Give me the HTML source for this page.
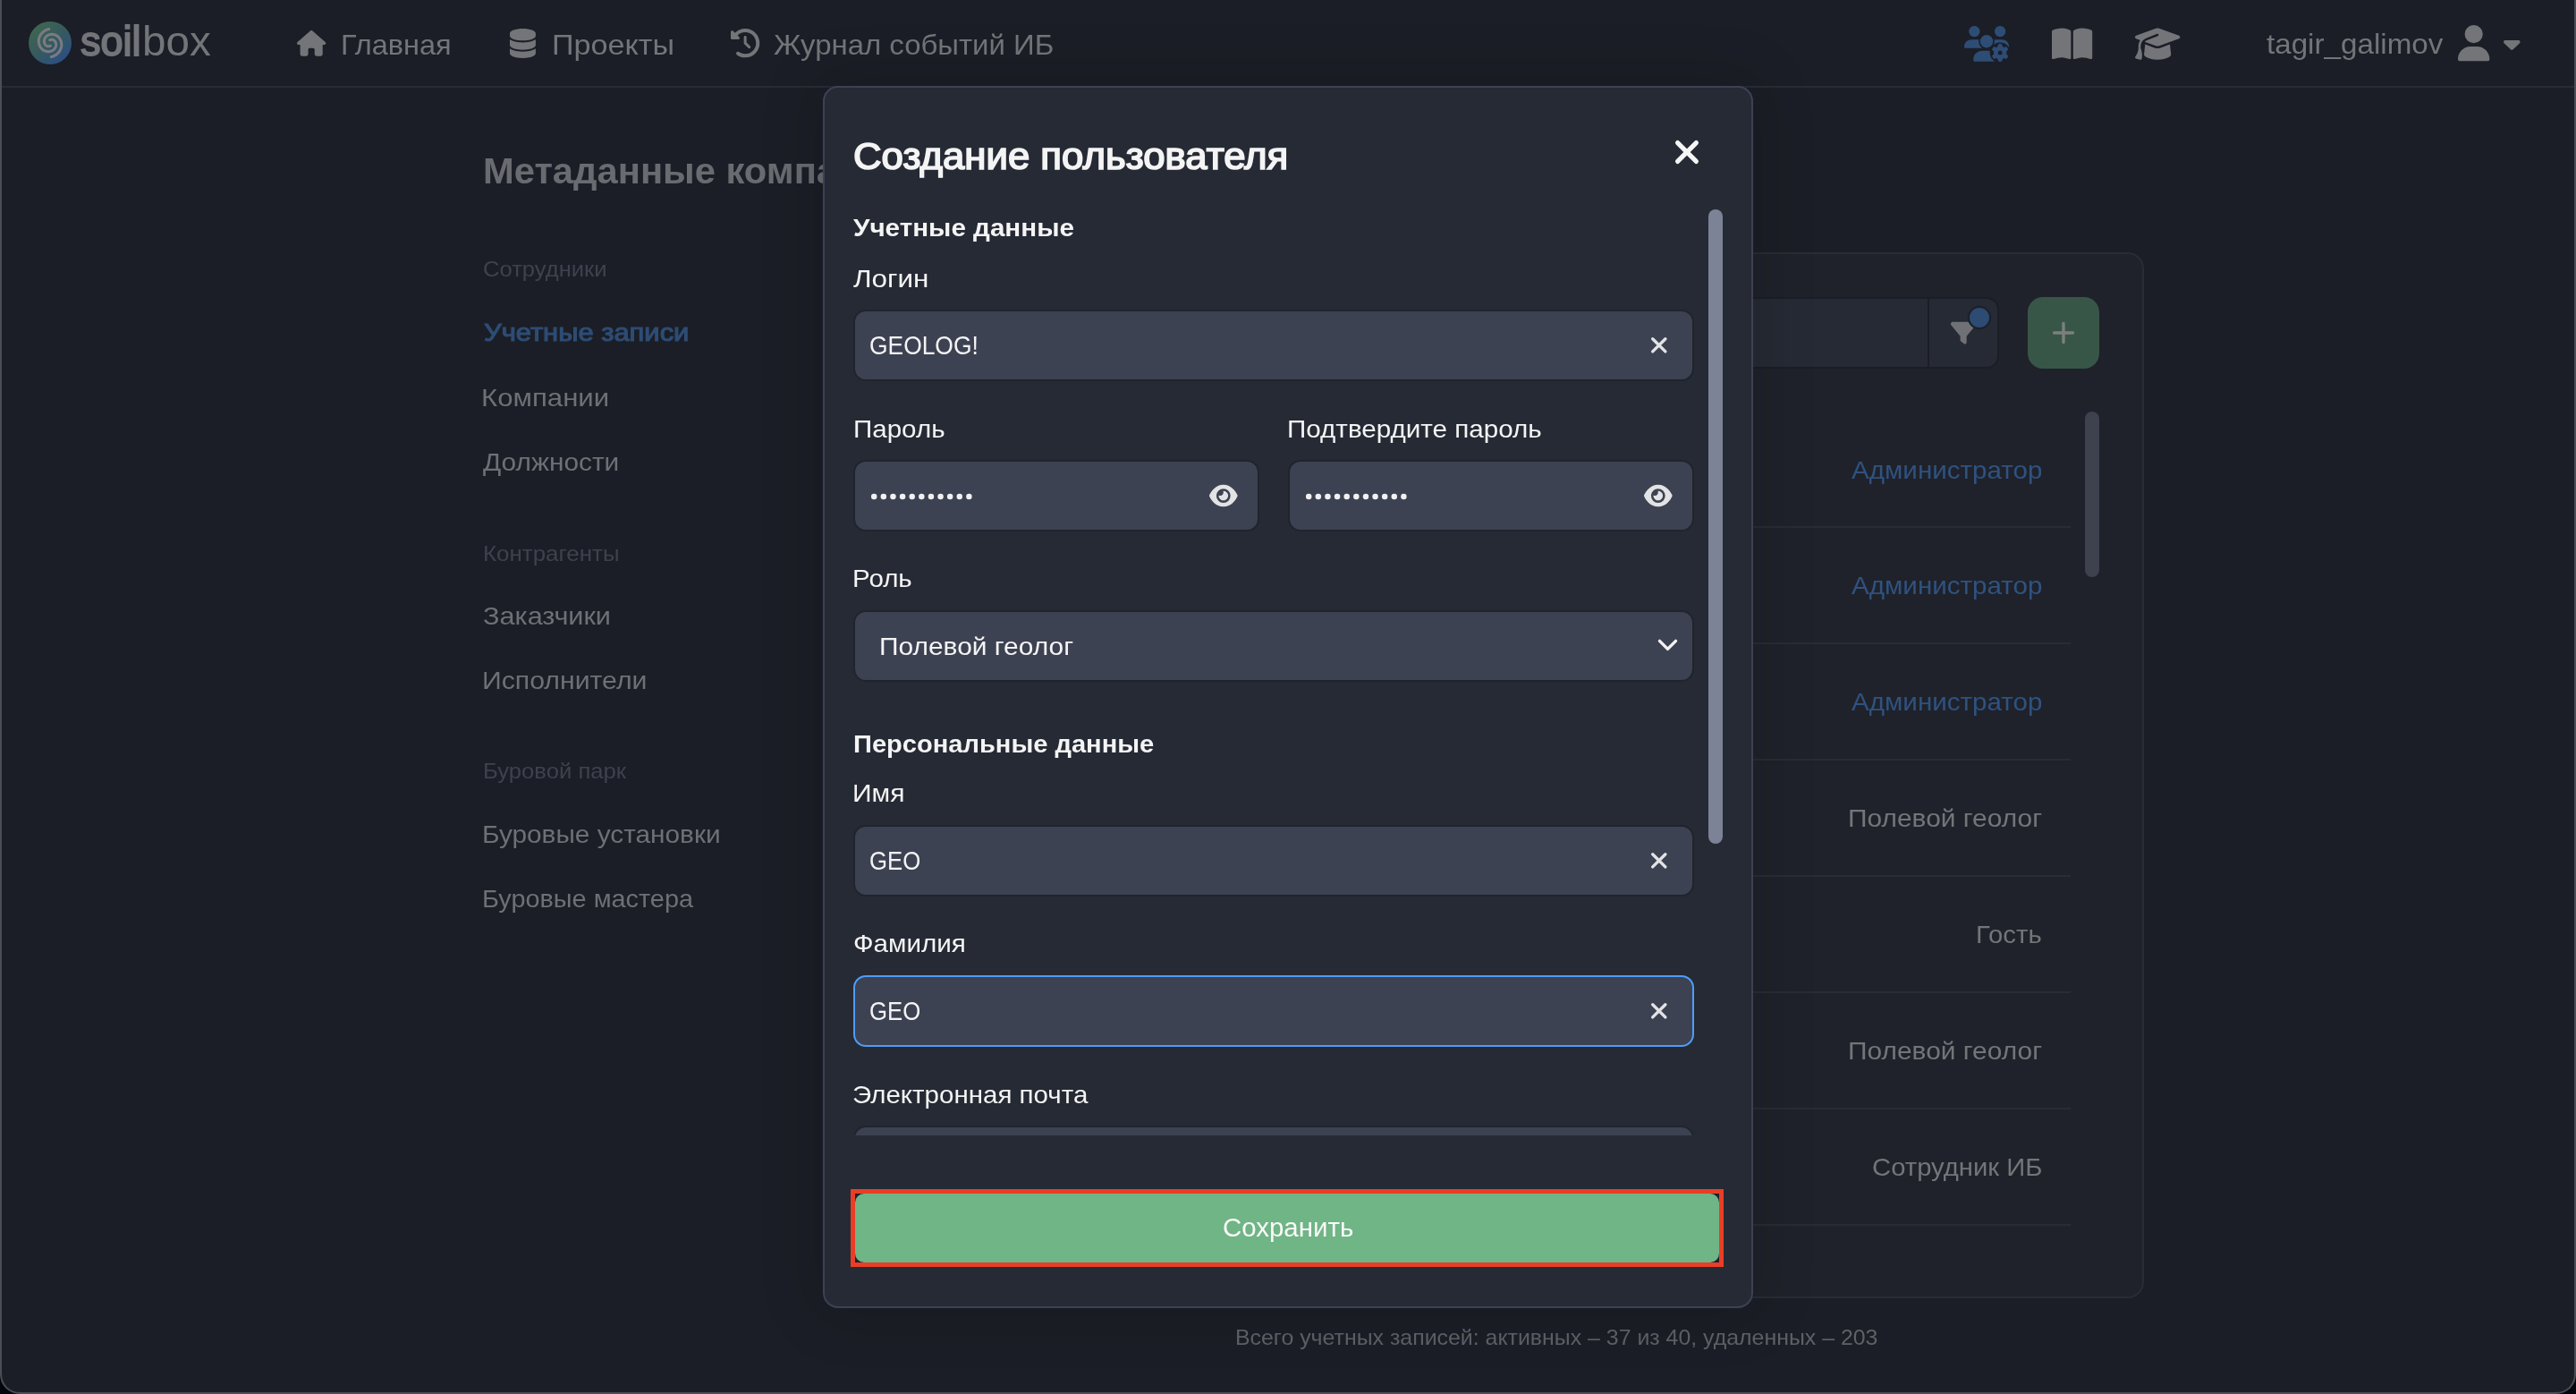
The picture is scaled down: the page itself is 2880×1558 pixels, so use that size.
<!DOCTYPE html>
<html lang="ru"><head><meta charset="utf-8"><title>soilbox</title>
<style>
html,body{margin:0;padding:0;background:#04050d}
body{width:2880px;height:1558px;font-family:"Liberation Sans", sans-serif;position:relative}
#win{position:absolute;left:0;top:0;width:2880px;height:1558px;box-sizing:border-box;background:#1b1e26;
 border-left:2px solid #4b4e54;border-right:2px solid #4b4e54;border-bottom:2px solid #4b4e54;border-radius:0 0 22px 22px;overflow:hidden}
#page{position:absolute;left:-2px;top:0;width:2880px;height:1558px;will-change:transform}
.t{position:absolute;white-space:nowrap;line-height:1;transform-origin:0 0;display:block}
.i{position:absolute;display:block;overflow:visible}
#nav{position:absolute;left:0;top:0;width:2880px;height:96px;border-bottom:2px solid #282c37;box-sizing:content-box}
#panel{position:absolute;left:1000px;top:282px;width:1397px;height:1169px;box-sizing:border-box;background:#1f222a;border:2px solid #282c36;border-radius:18px}
#search{position:absolute;left:1100px;top:332px;width:1135px;height:80px;box-sizing:border-box;background:#262a34;border:2px solid #1b1e26;border-radius:14px}
#search i{position:absolute;left:1053px;top:0;width:2px;height:76px;background:#1b1e26}
#add{position:absolute;left:2267px;top:332px;width:80px;height:80px;border-radius:17px;background:#385648}
.sep{position:absolute;left:1000px;width:1315px;height:2px;background:#282c36}
#lsb{position:absolute;left:2331px;top:460px;width:16px;height:185px;border-radius:8px;background:#3e414e}
#modal{position:absolute;left:920px;top:96px;width:1040px;height:1366px;box-sizing:border-box;background:#262a34;border:2px solid #3c4254;border-radius:17px;
 box-shadow:0 0 64px 8px rgba(4,3,0,.15)}
.in{position:absolute;box-sizing:border-box;height:80px;background:#3d4252;border:2px solid #20242e;border-radius:14px}
#msb{position:absolute;left:1910px;top:234px;width:16px;height:709px;border-radius:8px;background:#7c8397}
#clip{position:absolute;left:940px;top:1250px;width:970px;height:18.5px;overflow:hidden}
#red{position:absolute;left:951px;top:1329px;width:976px;height:87px;box-sizing:border-box;border:5px solid #e93e25;background:#1e2132}
#save{position:absolute;left:956px;top:1334px;width:966px;height:77px;border-radius:10px;background:#70b585}
</style></head>
<body>
<div id="win"><div id="page">
<div id="nav"></div>

<div id="panel"></div>
<div id="search"><i></i></div>
<div id="add"></div>
<div class="sep" style="top:588px"></div><div class="sep" style="top:718px"></div><div class="sep" style="top:848px"></div><div class="sep" style="top:978px"></div><div class="sep" style="top:1108px"></div><div class="sep" style="top:1238px"></div><div class="sep" style="top:1368px"></div>
<div id="lsb"></div>
<svg class="i" style="left:32px;top:24px" width="48" height="48" viewBox="0 0 48 48">
<defs><linearGradient id="lg" x1="0.15" y1="0.1" x2="0.85" y2="0.95"><stop offset="0" stop-color="#3f6650"/><stop offset="0.5" stop-color="#355960"/><stop offset="1" stop-color="#2b4f86"/></linearGradient></defs>
<circle cx="24" cy="24" r="24" fill="url(#lg)"/>
<g fill="none" stroke="#797b81" stroke-width="3.1" stroke-linejoin="round">
<path d="M24.00 8.30L22.69 8.52L21.43 8.85L20.20 9.28L19.03 9.81L17.93 10.43L16.89 11.13L15.92 11.91L15.04 12.77L14.24 13.68L13.53 14.65L12.91 15.66L12.39 16.71L11.97 17.79L11.64 18.88L11.41 19.99L11.28 21.10L11.25 22.20L11.31 23.29L11.46 24.36L11.70 25.39L12.02 26.39L12.43 27.34L12.90 28.24L13.45 29.09L14.06 29.87L14.72 30.59L15.43 31.24L16.19 31.82L16.98 32.32L17.80 32.74L18.64 33.09L19.50 33.36L20.36 33.55L21.22 33.66L22.08 33.70L22.92 33.66L23.74 33.55L24.53 33.37L25.29 33.13L26.02 32.83L26.70 32.47L27.34 32.06L27.93 31.60L28.47 31.10L28.95 30.57L29.37 30.01L29.74 29.42L30.04 28.81L30.29 28.20L30.47 27.57L30.60 26.95L30.67 26.33L30.68 25.72L30.64 25.12L30.54 24.55L30.40 23.99L30.21 23.47L29.98 22.98L29.71 22.52L29.41 22.10L29.08 21.72L28.73 21.38L28.35 21.09L27.96 20.84L27.56 20.63L27.15 20.46L26.75 20.34L26.34 20.27L25.94 20.23L25.55 20.24L25.18 20.28L24.83 20.35L24.50 20.46L24.19 20.60L23.91 20.76L23.65 20.94L23.43 21.15L23.24 21.36L23.08 21.59L22.95 21.83"/>
<path d="M24.00 39.70L25.31 39.48L26.57 39.15L27.80 38.72L28.97 38.19L30.07 37.57L31.11 36.87L32.08 36.09L32.96 35.23L33.76 34.32L34.47 33.35L35.09 32.34L35.61 31.29L36.03 30.21L36.36 29.12L36.59 28.01L36.72 26.90L36.75 25.80L36.69 24.71L36.54 23.64L36.30 22.61L35.98 21.61L35.57 20.66L35.10 19.76L34.55 18.91L33.94 18.13L33.28 17.41L32.57 16.76L31.81 16.18L31.02 15.68L30.20 15.26L29.36 14.91L28.50 14.64L27.64 14.45L26.78 14.34L25.92 14.30L25.08 14.34L24.26 14.45L23.47 14.63L22.71 14.87L21.98 15.17L21.30 15.53L20.66 15.94L20.07 16.40L19.53 16.90L19.05 17.43L18.63 17.99L18.26 18.58L17.96 19.19L17.71 19.80L17.53 20.43L17.40 21.05L17.33 21.67L17.32 22.28L17.36 22.88L17.46 23.45L17.60 24.01L17.79 24.53L18.02 25.02L18.29 25.48L18.59 25.90L18.92 26.28L19.27 26.62L19.65 26.91L20.04 27.16L20.44 27.37L20.85 27.54L21.25 27.66L21.66 27.73L22.06 27.77L22.45 27.76L22.82 27.72L23.17 27.65L23.50 27.54L23.81 27.40L24.09 27.24L24.35 27.06L24.57 26.85L24.76 26.64L24.92 26.41L25.05 26.17"/>
</g></svg>
<svg class="i" style="left:331.80px;top:33.80px" width="32.30" height="28.70" viewBox="0 0 576 512" preserveAspectRatio="none" ><path d="M575.8 255.5c0 18-15 32.1-32 32.1h-32l.7 160.2c0 2.700-.2 5.400-.5 8.100V472c0 22.100-17.900 40-40 40H456c-1.100 0-2.200 0-3.300-.1c-1.400 .1-2.800 .1-4.200 .1H416 392c-22.100 0-40-17.900-40-40V448 384c0-17.700-14.300-32-32-32H256c-17.700 0-32 14.300-32 32v64 24c0 22.100-17.900 40-40 40H160 128.100c-1.500 0-3-.1-4.500-.2c-1.200 .1-2.400 .2-3.600 .2H104c-22.100 0-40-17.900-40-40V360c0-.9 0-1.900 .1-2.800V287.600H32c-18 0-32-14-32-32.100c0-9 3-17 10-24L266.400 8c7-7 15-8 22-8s15 2 21 7L564.800 231.500c8 7 12 15 11 24z" fill="#737579"/></svg>
<svg class="i" style="left:570.40px;top:31.90px" width="28.90" height="32.90" viewBox="0 0 448 512" preserveAspectRatio="none" ><path d="M448 80v48c0 44.200-100.300 80-224 80S0 172.200 0 128V80C0 35.800 100.300 0 224 0S448 35.800 448 80zM393.200 214.700c20.800-7.400 39.900-16.900 54.800-28.600V288c0 44.200-100.300 80-224 80S0 332.200 0 288V186.100c14.900 11.800 34 21.200 54.800 28.600C99.700 230.700 159.500 240 224 240s124.300-9.300 169.200-25.300zM0 346.100c14.900 11.800 34 21.200 54.800 28.600C99.700 390.700 159.500 400 224 400s124.300-9.300 169.200-25.300c20.800-7.400 39.900-16.900 54.800-28.600V432c0 44.200-100.300 80-224 80S0 476.200 0 432V346.100z" fill="#737579"/></svg>
<svg class="i" style="left:817.10px;top:32.00px" width="32.30" height="32.30" viewBox="0 0 512 512" preserveAspectRatio="none" ><path d="M75 75L41 41C25.900 25.900 0 36.600 0 57.900V168c0 13.300 10.700 24 24 24H134.100c21.400 0 32.100-25.900 17-41l-30.800-30.800C155 85.500 203 64 256 64c106 0 192 86 192 192s-86 192-192 192c-40.800 0-78.600-12.700-109.700-34.400c-14.500-10.100-34.400-6.600-44.600 7.900s-6.600 34.400 7.900 44.600C151.200 495 201.700 512 256 512c141.400 0 256-114.600 256-256S397.400 0 256 0C185.300 0 121.300 28.700 75 75zm181 53c-13.300 0-24 10.700-24 24V256c0 6.400 2.500 12.500 7 17l72 72c9.400 9.400 24.600 9.400 33.900 0s9.400-24.600 0-33.900l-65-65V152c0-13.300-10.700-24-24-24z" fill="#737579"/></svg>
<svg class="i" style="left:2195.80px;top:28.90px" width="50.20" height="40.10" viewBox="0 0 405 325" preserveAspectRatio="none" >
<g fill="#2e4d75">
 <circle cx="92" cy="49" r="50"/><circle cx="324" cy="49" r="50"/>
 <path d="M0 188 C0 150 30 124 68 124 L160 124 L160 200 L10 200 C4 200 0 196 0 188Z"/>
 <path d="M250 124 L340 124 C378 124 405 152 405 190 L405 210 L250 210Z"/>
 <circle cx="202" cy="140" r="71" fill="#1b1e26"/>
 <circle cx="202" cy="140" r="58"/>
 <path d="M82 306 C82 258 118 224 165 224 L300 224 L300 323 L96 323 C88 323 82 316 82 306Z"/>
 <g transform="translate(324 243)">
  <circle r="93" fill="#1b1e26"/>
  <path d="M-13 -76 L13 -76 L18 -55 L36 -45 L57 -52 L70 -29 L54 -14 L54 14 L70 29 L57 52 L36 45 L18 55 L13 76 L-13 76 L-18 55 L-36 45 L-57 52 L-70 29 L-54 14 L-54 -14 L-70 -29 L-57 -52 L-36 -45 L-18 -55Z M0 -24 A24 24 0 1 0 0 24 A24 24 0 1 0 0 -24Z" fill-rule="evenodd" stroke="#2e4d75" stroke-width="8" stroke-linejoin="round"/>
 </g>
</g></svg>
<svg class="i" style="left:2293.90px;top:29.20px" width="45.20" height="40.20" viewBox="0 0 576 512" preserveAspectRatio="none" ><path d="M249.600 471.500c10.800 3.800 22.400-4.100 22.400-15.500V78.600c0-4.200-1.600-8.400-5-11C247.400 52 202.400 32 144 32C93.500 32 46.300 45.300 18.100 56.100C6.800 60.500 0 71.700 0 83.800V454.100c0 11.900 12.800 20.200 24.100 16.500C55.600 460.100 105.500 448 144 448c33.900 0 79 14 105.600 23.500zm76.800 0C353 462 398.100 448 432 448c38.500 0 88.400 12.100 119.900 22.600c11.300 3.800 24.100-4.600 24.100-16.500V83.800c0-12.100-6.800-23.300-18.100-27.600C529.700 45.300 482.500 32 432 32c-58.400 0-103.400 20-123 35.600c-3.300 2.600-5 6.800-5 11V456c0 11.400 11.700 19.300 22.400 15.500z" fill="#737579"/></svg>
<svg class="i" style="left:2386.70px;top:29.00px" width="50.30" height="40.20" viewBox="0 0 640 512" preserveAspectRatio="none" ><path d="M320 32c-8.100 0-16.100 1.400-23.700 4.100L15.800 137.400C6.300 140.900 0 149.900 0 160s6.300 19.100 15.800 22.600l57.900 20.900C57.300 229.300 48 259.800 48 291.900v28.100c0 28.400-10.800 57.700-22.300 80.800c-6.500 13-13.900 25.800-22.500 37.600C0 442.700-.9 448.300 .9 453.400s6 8.900 11.200 10.200l64 16c4.200 1.100 8.700 .3 12.400-2s6.300-6.100 7.100-10.400c8.600-42.800 4.300-81.200-2.100-108.700C90.300 344.300 86 329.800 80 316.500V291.900c0-30.200 10.200-58.700 27.900-81.500c12.900-15.500 29.600-28 49.200-35.700l157-61.700c8.200-3.200 17.500 .8 20.700 9s-.8 17.500-9 20.700l-157 61.700c-12.400 4.900-23.300 12.400-32.200 21.600l159.600 57.600c7.600 2.700 15.600 4.100 23.700 4.100s16.100-1.400 23.700-4.100L624.200 182.600c9.500-3.400 15.800-12.500 15.800-22.600s-6.300-19.100-15.800-22.600L343.700 36.100C336.100 33.400 328.100 32 320 32zM128 408c0 35.300 86 72 192 72s192-36.700 192-72L496.700 262.600 354.500 314c-11.100 4-22.800 6-34.500 6s-23.500-2-34.500-6L143.300 262.600 128 408z" fill="#737579"/></svg>
<svg class="i" style="left:2747.70px;top:27.80px" width="35.40" height="40.30" viewBox="0 0 448 512" preserveAspectRatio="none" ><path d="M224 256A128 128 0 1 0 224 0a128 128 0 1 0 0 256zm-45.700 48C79.800 304 0 383.800 0 482.300C0 498.700 13.300 512 29.700 512H418.300c16.400 0 29.700-13.300 29.700-29.700C448 383.800 368.200 304 269.700 304H178.300z" fill="#737579"/></svg>
<svg class="i" style="left:2798.60px;top:44.60px" width="18.60" height="10.90" viewBox="0 190 320 196" preserveAspectRatio="none" ><path d="M137.400 374.600c12.500 12.500 32.800 12.500 45.300 0l128-128c9.200-9.200 11.900-22.900 6.900-34.900s-16.600-19.800-29.600-19.800L32 192c-12.900 0-24.600 7.800-29.600 19.800s-2.200 25.700 6.900 34.900l128 128z" fill="#737579"/></svg>
<svg class="i" style="left:2180.80px;top:357.70px" width="28.30" height="28.30" viewBox="0 0 512 512" preserveAspectRatio="none" ><path d="M3.900 54.900C10.500 40.900 24.500 32 40 32H472c15.500 0 29.500 8.900 36.100 22.900s4.600 30.500-5.200 42.500L320 320.900V448c0 12.100-6.800 23.200-17.700 28.600s-23.800 4.300-33.500-3l-64-48c-8.100-6-12.800-15.500-12.800-25.600V320.900L9 97.300C-.7 85.400-2.800 68.800 3.900 54.900z" fill="#6f7176"/></svg>
<div style="position:absolute;left:2201.8px;top:344px;width:22.4px;height:22.4px;border-radius:50%;background:#2d4b73;box-shadow:0 0 0 2.2px #1d2029"></div>
<svg class="i" style="left:2294px;top:359px" width="26" height="26" viewBox="-13 -13 26 26"><path d="M-10.5 0H10.5M0 -10.5V10.5" stroke="#7b807f" stroke-width="3.4" stroke-linecap="round"/></svg>
<span class="t" style="left:89.98px;top:22.21px;font-size:47px;font-weight:normal;color:#737579;-webkit-text-stroke:1.88px #737579;transform:scaleX(0.9588)">soil</span>
<span class="t" style="left:158.96px;top:22.21px;font-size:47px;font-weight:normal;color:#737579;transform:scaleX(1.0128)">box</span>
<span class="t" style="left:380.87px;top:33.71px;font-size:32px;font-weight:normal;color:#737579;transform:scaleX(1.0155)">Главная</span>
<span class="t" style="left:616.97px;top:33.71px;font-size:32px;font-weight:normal;color:#737579;transform:scaleX(1.0667)">Проекты</span>
<span class="t" style="left:865.10px;top:33.71px;font-size:32px;font-weight:normal;color:#737579;transform:scaleX(1.0292)">Журнал событий ИБ</span>
<span class="t" style="left:2533.90px;top:32.91px;font-size:32px;font-weight:normal;color:#737579;transform:scaleX(1.0367)">tagir_galimov</span>
<span class="t" style="left:539.91px;top:171.24px;font-size:40px;font-weight:bold;color:#696b70;transform:scaleX(1.0429)">Метаданные компании</span>
<span class="t" style="left:540.13px;top:288.68px;font-size:24px;font-weight:normal;color:#3e424e;transform:scaleX(1.0659)">Сотрудники</span>
<span class="t" style="left:540.66px;top:358.30px;font-size:28px;font-weight:normal;color:#2e4d75;-webkit-text-stroke:1.12px #2e4d75;transform:scaleX(1.1048)">Учетные записи</span>
<span class="t" style="left:538.37px;top:431.20px;font-size:28px;font-weight:normal;color:#6e7075;transform:scaleX(1.1131)">Компании</span>
<span class="t" style="left:539.50px;top:503.10px;font-size:28px;font-weight:normal;color:#6e7075;transform:scaleX(1.0662)">Должности</span>
<span class="t" style="left:539.52px;top:606.68px;font-size:24px;font-weight:normal;color:#3e424e;transform:scaleX(1.0792)">Контрагенты</span>
<span class="t" style="left:540.10px;top:674.70px;font-size:28px;font-weight:normal;color:#6e7075;transform:scaleX(1.0946)">Заказчики</span>
<span class="t" style="left:538.94px;top:747.30px;font-size:28px;font-weight:normal;color:#6e7075;transform:scaleX(1.0797)">Исполнители</span>
<span class="t" style="left:540.03px;top:850.48px;font-size:24px;font-weight:normal;color:#3e424e;transform:scaleX(1.0687)">Буровой парк</span>
<span class="t" style="left:538.87px;top:919.20px;font-size:28px;font-weight:normal;color:#6e7075;transform:scaleX(1.0641)">Буровые установки</span>
<span class="t" style="left:538.94px;top:991.40px;font-size:28px;font-weight:normal;color:#6e7075;transform:scaleX(1.0307)">Буровые мастера</span>
<span class="t" style="left:2069.50px;top:511.50px;font-size:28px;font-weight:normal;color:#2f5280;transform:scaleX(1.0569)">Администратор</span>
<span class="t" style="left:2069.50px;top:641.30px;font-size:28px;font-weight:normal;color:#2f5280;transform:scaleX(1.0569)">Администратор</span>
<span class="t" style="left:2069.50px;top:771.30px;font-size:28px;font-weight:normal;color:#2f5280;transform:scaleX(1.0569)">Администратор</span>
<span class="t" style="left:2065.56px;top:901.30px;font-size:28px;font-weight:normal;color:#737579;transform:scaleX(1.0687)">Полевой геолог</span>
<span class="t" style="left:2209.30px;top:1031.30px;font-size:28px;font-weight:normal;color:#737579;transform:scaleX(1.0490)">Гость</span>
<span class="t" style="left:2065.56px;top:1161.30px;font-size:28px;font-weight:normal;color:#737579;transform:scaleX(1.0687)">Полевой геолог</span>
<span class="t" style="left:2093.36px;top:1290.90px;font-size:28px;font-weight:normal;color:#737579;transform:scaleX(1.0449)">Сотрудник ИБ</span>
<span class="t" style="left:1381.06px;top:1483.38px;font-size:24px;font-weight:normal;color:#5f6167;transform:scaleX(1.0367)">Всего учетных записей: активных – 37 из 40, удаленных – 203</span>
<div id="modal"></div>
<div class="in" style="left:954px;top:346px;width:940px"></div>
<div class="in" style="left:954px;top:514px;width:454px"></div>
<div class="in" style="left:1440px;top:514px;width:454px"></div>
<div class="in" style="left:954px;top:682px;width:940px"></div>
<div class="in" style="left:954px;top:922px;width:940px"></div>
<div class="in" style="left:954px;top:1090px;width:940px;border-color:#4e9dfa"></div>
<div id="clip"><div class="in" style="left:14px;top:8px;width:940px"></div></div>
<div id="msb"></div>
<div id="red"></div><div id="save"></div>
<svg class="i" style="left:1871.00px;top:154.80px" width="30.00" height="30.00" viewBox="-15.00 -15.00 30.00 30.00"><path d="M-10.40 -10.40L10.40 10.40M10.40 -10.40L-10.40 10.40" stroke="#f5f5f5" stroke-width="5.2" stroke-linecap="round" fill="none"/></svg>
<svg class="i" style="left:1843.80px;top:375.40px" width="21.60" height="21.60" viewBox="-10.80 -10.80 21.60 21.60"><path d="M-7.10 -7.10L7.10 7.10M7.10 -7.10L-7.10 7.10" stroke="#e2e3e5" stroke-width="3.4" stroke-linecap="round" fill="none"/></svg>
<svg class="i" style="left:1843.80px;top:951.20px" width="21.60" height="21.60" viewBox="-10.80 -10.80 21.60 21.60"><path d="M-7.10 -7.10L7.10 7.10M7.10 -7.10L-7.10 7.10" stroke="#e2e3e5" stroke-width="3.4" stroke-linecap="round" fill="none"/></svg>
<svg class="i" style="left:1843.80px;top:1119.20px" width="21.60" height="21.60" viewBox="-10.80 -10.80 21.60 21.60"><path d="M-7.10 -7.10L7.10 7.10M7.10 -7.10L-7.10 7.10" stroke="#e2e3e5" stroke-width="3.4" stroke-linecap="round" fill="none"/></svg>
<svg class="i" style="left:1351.70px;top:539.85px" width="31.60" height="28.10" viewBox="0 0 576 512" preserveAspectRatio="none" ><path d="M288 32c-80.800 0-145.500 36.800-192.600 80.600C48.600 156 17.300 208 2.500 243.700c-3.300 7.900-3.300 16.700 0 24.600C17.300 304 48.600 356 95.400 399.400C142.500 443.200 207.200 480 288 480s145.500-36.800 192.600-80.600c46.800-43.500 78.100-95.400 93-131.100c3.300-7.900 3.300-16.700 0-24.600c-14.900-35.700-46.200-87.700-93-131.100C433.500 68.800 368.800 32 288 32zM144 256a144 144 0 1 1 288 0 144 144 0 1 1 -288 0zm144-64c0 35.300-28.700 64-64 64c-7.100 0-13.900-1.200-20.300-3.300c-5.500-1.800-11.900 1.600-11.700 7.400c.3 6.900 1.300 13.800 3.200 20.700c13.700 51.200 66.400 81.600 117.600 67.900s81.600-66.400 67.900-117.600c-11.100-41.500-47.800-69.400-88.600-71.100c-5.800-.2-9.200 6.100-7.400 11.700c2.100 6.400 3.300 13.200 3.300 20.300z" fill="#e2e3e5"/></svg>
<svg class="i" style="left:1838.10px;top:539.85px" width="31.60" height="28.10" viewBox="0 0 576 512" preserveAspectRatio="none" ><path d="M288 32c-80.800 0-145.500 36.800-192.600 80.600C48.600 156 17.300 208 2.500 243.700c-3.300 7.900-3.300 16.700 0 24.600C17.300 304 48.600 356 95.400 399.400C142.500 443.200 207.200 480 288 480s145.500-36.800 192.600-80.600c46.800-43.500 78.100-95.400 93-131.100c3.300-7.900 3.300-16.700 0-24.600c-14.900-35.700-46.200-87.700-93-131.100C433.500 68.800 368.800 32 288 32zM144 256a144 144 0 1 1 288 0 144 144 0 1 1 -288 0zm144-64c0 35.300-28.700 64-64 64c-7.100 0-13.900-1.200-20.300-3.300c-5.500-1.800-11.900 1.600-11.700 7.400c.3 6.900 1.300 13.800 3.200 20.700c13.700 51.200 66.400 81.600 117.600 67.900s81.600-66.400 67.900-117.600c-11.100-41.500-47.800-69.400-88.600-71.100c-5.800-.2-9.200 6.100-7.400 11.700c2.100 6.400 3.300 13.200 3.300 20.300z" fill="#e2e3e5"/></svg>
<svg class="i" style="left:1851px;top:711px" width="27" height="20" viewBox="-13.5 -10 27 20"><path d="M-9 -4.6L0 4.4L9 -4.6" stroke="#f2f2f3" stroke-width="3.4" stroke-linecap="round" stroke-linejoin="round" fill="none"/></svg>
<svg class="i" style="left:973.7px;top:550.6px" width="120" height="8" viewBox="0 0 120 8" fill="#f1f1f2"><circle cx="3.20" cy="4" r="3.25"/><circle cx="13.82" cy="4" r="3.25"/><circle cx="24.44" cy="4" r="3.25"/><circle cx="35.06" cy="4" r="3.25"/><circle cx="45.68" cy="4" r="3.25"/><circle cx="56.30" cy="4" r="3.25"/><circle cx="66.92" cy="4" r="3.25"/><circle cx="77.54" cy="4" r="3.25"/><circle cx="88.16" cy="4" r="3.25"/><circle cx="98.78" cy="4" r="3.25"/><circle cx="109.40" cy="4" r="3.25"/></svg>
<svg class="i" style="left:1460.3px;top:550.6px" width="120" height="8" viewBox="0 0 120 8" fill="#f1f1f2"><circle cx="3.20" cy="4" r="3.25"/><circle cx="13.82" cy="4" r="3.25"/><circle cx="24.44" cy="4" r="3.25"/><circle cx="35.06" cy="4" r="3.25"/><circle cx="45.68" cy="4" r="3.25"/><circle cx="56.30" cy="4" r="3.25"/><circle cx="66.92" cy="4" r="3.25"/><circle cx="77.54" cy="4" r="3.25"/><circle cx="88.16" cy="4" r="3.25"/><circle cx="98.78" cy="4" r="3.25"/><circle cx="109.40" cy="4" r="3.25"/></svg>
<span class="t" style="left:953.93px;top:154.09px;font-size:41.6px;font-weight:normal;color:#f4f4f5;-webkit-text-stroke:1.66px #f4f4f5;transform:scaleX(1.0513)">Создание пользователя</span>
<span class="t" style="left:954.10px;top:241.30px;font-size:28px;font-weight:bold;color:#f4f4f5;transform:scaleX(1.0578)">Учетные данные</span>
<span class="t" style="left:953.70px;top:297.50px;font-size:28px;font-weight:normal;color:#f4f4f5;transform:scaleX(1.1219)">Логин</span>
<span class="t" style="left:972.19px;top:372.35px;font-size:29px;font-weight:normal;color:#f4f4f5;transform:scaleX(0.9105)">GEOLOG!</span>
<span class="t" style="left:953.59px;top:465.50px;font-size:28px;font-weight:normal;color:#f4f4f5;transform:scaleX(1.0554)">Пароль</span>
<span class="t" style="left:1439.19px;top:465.50px;font-size:28px;font-weight:normal;color:#f4f4f5;transform:scaleX(1.0572)">Подтвердите пароль</span>
<span class="t" style="left:953.19px;top:633.20px;font-size:28px;font-weight:normal;color:#f4f4f5;transform:scaleX(1.0537)">Роль</span>
<span class="t" style="left:982.56px;top:708.50px;font-size:28px;font-weight:normal;color:#f4f4f5;transform:scaleX(1.0687)">Полевой геолог</span>
<span class="t" style="left:954.26px;top:817.70px;font-size:28px;font-weight:bold;color:#f4f4f5;transform:scaleX(1.0384)">Персональные данные</span>
<span class="t" style="left:952.95px;top:873.10px;font-size:28px;font-weight:normal;color:#f4f4f5;transform:scaleX(1.0725)">Имя</span>
<span class="t" style="left:972.21px;top:947.85px;font-size:29px;font-weight:normal;color:#f4f4f5;transform:scaleX(0.8871)">GEO</span>
<span class="t" style="left:953.94px;top:1041.20px;font-size:28px;font-weight:normal;color:#f4f4f5;transform:scaleX(1.0589)">Фамилия</span>
<span class="t" style="left:972.21px;top:1115.65px;font-size:29px;font-weight:normal;color:#f4f4f5;transform:scaleX(0.8871)">GEO</span>
<span class="t" style="left:953.45px;top:1209.90px;font-size:28px;font-weight:normal;color:#f4f4f5;transform:scaleX(1.0538)">Электронная почта</span>
<span class="t" style="left:1367.09px;top:1357.55px;font-size:29px;font-weight:normal;color:#fafafa;transform:scaleX(1.0148)">Сохранить</span>
</div></div>
</body></html>
